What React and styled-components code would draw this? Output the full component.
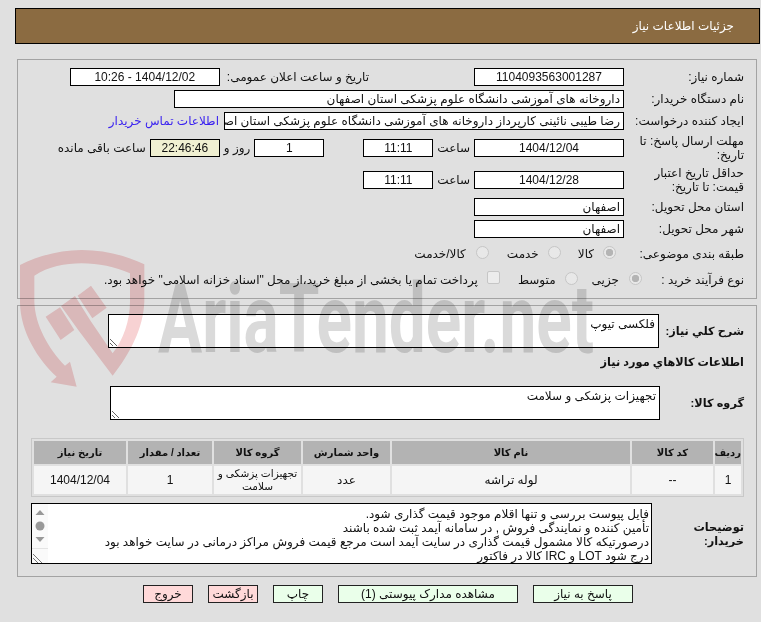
import React from "react";
import styled, { createGlobalStyle } from "styled-components";

const Global = createGlobalStyle`
  html, body { margin: 0; padding: 0; background: #e0e0e0; }
  body { font-family: "Liberation Sans", "DejaVu Sans", sans-serif; font-size: 12px; color: #111; direction: rtl; }
  * { box-sizing: border-box; }
`;

const Page = styled.div`
  position: relative;
  width: 761px;
  height: 622px;
  overflow: hidden;
  padding-top: 8px;
`;
const Header = styled.div`
  width: 745px;
  height: 36px;
  margin-right: 1px;
  background: #8b6b41;
  border: 1px solid #000;
  color: #fff;
  padding: 0 25px 0 0;
  display: flex;
  align-items: center;
  font-size: 12px;
`;
const Panel = styled.section`
  width: 740px;
  margin-right: 4px;
  margin-top: ${p => p.$top}px;
  height: ${p => p.$h}px;
  border: 1px solid #a3a3a3;
  padding: ${p => p.$pad}px 12px 0 0;
`;
const Row = styled.div`
  display: flex;
  align-items: center;
  height: ${p => p.$h || 18}px;
  margin-bottom: ${p => p.$mb ?? 4}px;
`;
const Label = styled.div`
  width: ${p => p.$w || 120}px;
  flex: none;
  line-height: 14px;
  font-weight: ${p => (p.$bold ? 700 : 400)};
  font-size: ${p => (p.$bold ? "11.3px" : "12px")};
`;
const Text = styled.span`
  flex: none;
  margin-right: ${p => p.$mr || 0}px;
  white-space: nowrap;
`;
const Field = styled.div`
  flex: none;
  width: ${p => p.$w}px;
  height: 18px;
  margin-right: ${p => p.$mr || 0}px;
  background: ${p => p.$bg || "#fff"};
  border: 1px solid #000;
  line-height: 16px;
  padding: 0 3px;
  text-align: ${p => (p.$center ? "center" : "right")};
  white-space: nowrap;
  overflow: hidden;
`;
const ContactLink = styled.a`
  flex: none;
  margin-right: 5px;
  color: #3a22f0;
  white-space: nowrap;
`;
const Radio = styled.input.attrs({ type: "radio", disabled: true })`
  appearance: none;
  flex: none;
  width: 13px;
  height: 13px;
  margin: -3px ${p => p.$mr || 0}px 0 0;
  border-radius: 50%;
  border: 1px solid #c6c6c6;
  background: #e8e8e8;
  &:checked {
    background: radial-gradient(circle, #b4b4b4 0 3.4px, #e8e8e8 4px);
  }
`;
const Check = styled.input.attrs({ type: "checkbox", disabled: true })`
  appearance: none;
  flex: none;
  width: 13px;
  height: 13px;
  margin: -5px ${p => p.$mr || 0}px 0 0;
  border: 1px solid #c6c6c6;
  border-radius: 2px;
  background: #ececec;
`;
const Area = styled.textarea`
  flex: none;
  width: ${p => p.$w}px;
  height: 34px;
  margin-right: ${p => p.$mr || 0}px;
  border: 1px solid #000;
  border-radius: 0;
  background: #fff;
  padding: 2px 3px;
  font: inherit;
  color: inherit;
  resize: both;
  outline: none;
  overflow: hidden;
`;
const SubTitle = styled.div`
  font-weight: 700;
  font-size: 11.3px;
  height: 14px;
  line-height: 14px;
  margin-bottom: 17px;
`;
const Table = styled.table`
  width: 713px;
  margin-top: 18px;
  border: 1px solid #c8c8c8;
  border-spacing: 2px;
  border-collapse: separate;
  table-layout: fixed;
  height: 59px;
`;
const Th = styled.th`
  width: ${p => p.$w}px;
  height: 23px;
  padding: 0;
  background: #b3b3b3;
  font-weight: 700;
  font-size: 10px;
  text-align: center;
  white-space: nowrap;
`;
const Td = styled.td`
  height: 28px;
  padding: 0;
  background: #f5f5f5;
  text-align: center;
  line-height: 13px;
  white-space: nowrap;
  font-size: ${p => p.$size || 12}px;
`;
const NotesRow = styled.div`
  display: flex;
  align-items: center;
  margin-top: 6px;
`;
const Notes = styled.div`
  display: flex;
  width: 621px;
  height: 61px;
  border: 1px solid #000;
  background: #fff;
`;
const NotesText = styled.div`
  flex: 1;
  padding: 3px 2px 0 0;
  line-height: 14px;
  white-space: nowrap;
`;
const ScrollTrack = styled.div`
  flex: none;
  width: 16px;
  background: #fafafa;
  display: flex;
  flex-direction: column;
  align-items: center;
  direction: ltr;
`;
const Grip = styled.div`
  margin-top: auto;
  width: 100%;
  height: 15px;
  border-top: 1px solid #e4e4e4;
  display: flex;
`;
const Buttons = styled.div`
  display: flex;
  gap: 15px;
  margin-top: 8px;
  padding-right: 128px;
`;
const Btn = styled.button`
  width: ${p => p.$w}px;
  height: 18px;
  padding: 0;
  border: 1px solid #222;
  background: ${p => (p.$red ? "#ffd9d9" : "#eaffea")};
  color: #111;
  font: inherit;
`;
const Watermark = styled.svg`
  position: absolute;
  inset: 0;
  pointer-events: none;
  mix-blend-mode: multiply;
`;

const Mark = () => (
  <Watermark width="761" height="622" viewBox="0 0 761 622" direction="ltr">
    <g transform="translate(15 245) scale(0.3333)" fill="#f7d2d3">
      <path d="M15 60 C75 30 140 15 200 15 C265 15 330 30 388 58 L388 170 C385 250 345 325 293 392 L192 258 L138 183 L180 153 L227 228 L293 325 C325 285 345 225 345 170 L345 85 C300 65 250 55 200 55 C150 55 100 65 58 92 L58 170 C60 240 100 310 150 362 L165 350 L185 425 L107 412 L125 395 C70 345 15 260 15 170 Z" />
      <path d="M92 215 L135 187 L178 255 L137 285 Z" />
      <path d="M188 152 L228 122 L275 188 L232 220 Z" />
    </g>
    <text x="158" y="352" fontFamily="Roboto, sans-serif" fontWeight="700" fontSize="96" fill="#dadada" textLength="436" lengthAdjust="spacingAndGlyphs">AriaTender.net</text>
  </Watermark>
);

const ScrollIcons = () => (
  <svg width="14" height="36" viewBox="0 0 14 36" style={{ marginTop: 5 }}>
    <path d="M2.5 6 L7 1 L11.5 6 Z" fill="#999" />
    <circle cx="7" cy="17" r="4.5" fill="#999" />
    <path d="M2.5 28 L11.5 28 L7 33 Z" fill="#999" />
  </svg>
);

const GripIcon = () => (
  <svg width="12" height="12" viewBox="0 0 12 12" style={{ marginTop: 3 }}>
    <path d="M1 2 L10 11 M1 6 L6 11" stroke="#777" strokeWidth="1" />
  </svg>
);

export default function App() {
  return (
    <Page>
      <Global />
      <Header>جزئیات اطلاعات نیاز</Header>
      <Panel $top={15} $h={240} $pad={8}>
        <Row>
          <Label>شماره نیاز:</Label>
          <Field $w={150} $center>1104093563001287</Field>
          <Text $mr={105}>تاریخ و ساعت اعلان عمومی:</Text>
          <Field $w={150} $center $mr={7}>1404/12/02 - 10:26</Field>
        </Row>
        <Row>
          <Label>نام دستگاه خریدار:</Label>
          <Field $w={450}>داروخانه های آموزشی دانشگاه علوم پزشکی استان اصفهان</Field>
        </Row>
        <Row>
          <Label>ایجاد کننده درخواست:</Label>
          <Field $w={400}>رضا طیبی نائینی کارپرداز داروخانه های آموزشی دانشگاه علوم پزشکی استان اصفهان</Field>
          <ContactLink>اطلاعات تماس خریدار</ContactLink>
        </Row>
        <Row $h={28}>
          <Label>مهلت ارسال پاسخ: تا تاریخ:</Label>
          <Field $w={150} $center>1404/12/04</Field>
          <Text $mr={4}>ساعت</Text>
          <Field $w={70} $center $mr={4}>11:11</Field>
          <Field $w={70} $center $mr={39}>1</Field>
          <Text $mr={4}>روز و</Text>
          <Field $w={70} $center $mr={4} $bg="#f0f0d2">22:46:46</Field>
          <Text $mr={4}>ساعت باقی مانده</Text>
        </Row>
        <Row $h={28}>
          <Label>حداقل تاریخ اعتبار قیمت: تا تاریخ:</Label>
          <Field $w={150} $center>1404/12/28</Field>
          <Text $mr={4}>ساعت</Text>
          <Field $w={70} $center $mr={4}>11:11</Field>
        </Row>
        <Row>
          <Label>استان محل تحویل:</Label>
          <Field $w={150}>اصفهان</Field>
        </Row>
        <Row>
          <Label>شهر محل تحویل:</Label>
          <Field $w={150}>اصفهان</Field>
        </Row>
        <Row $h={24}>
          <Label>طبقه بندی موضوعی:</Label>
          <Radio checked readOnly $mr={8} />
          <Text $mr={9}>کالا</Text>
          <Radio $mr={17} />
          <Text $mr={9}>خدمت</Text>
          <Radio $mr={18} />
          <Text $mr={10}>کالا/خدمت</Text>
        </Row>
        <Row $h={20} $mb={0}>
          <Label $w={102}>نوع فرآیند خرید :</Label>
          <Radio checked readOnly $mr={0} />
          <Text $mr={10}>جزیی</Text>
          <Radio $mr={14} />
          <Text $mr={9}>متوسط</Text>
          <Check $mr={18} />
          <Text $mr={9}>پرداخت تمام یا بخشی از مبلغ خرید،از محل "اسناد خزانه اسلامی" خواهد بود.</Text>
        </Row>
      </Panel>
      <Panel $top={6} $h={272} $pad={8}>
        <Row $h={34} $mb={7}>
          <Label $w={85} $bold>شرح کلي نياز:</Label>
          <Area $w={551} readOnly defaultValue="فلکسی تیوپ" />
        </Row>
        <SubTitle>اطلاعات کالاهاي مورد نياز</SubTitle>
        <Row $h={34} $mb={0}>
          <Label $w={84} $bold>گروه کالا:</Label>
          <Area $w={550} readOnly defaultValue="تجهیزات پزشکی و سلامت" />
        </Row>
        <Table>
          <thead>
            <tr>
              <Th $w={26}>ردیف</Th>
              <Th $w={81}>کد کالا</Th>
              <Th $w={238}>نام کالا</Th>
              <Th $w={87}>واحد شمارش</Th>
              <Th $w={87}>گروه کالا</Th>
              <Th $w={84}>تعداد / مقدار</Th>
              <Th $w={92}>تاریخ نیاز</Th>
            </tr>
          </thead>
          <tbody>
            <tr>
              <Td>1</Td>
              <Td>--</Td>
              <Td>لوله تراشه</Td>
              <Td>عدد</Td>
              <Td $size={10.5}>تجهیزات پزشکی و<br />سلامت</Td>
              <Td>1</Td>
              <Td>1404/12/04</Td>
            </tr>
          </tbody>
        </Table>
        <NotesRow>
          <Label $w={92} $bold>توضیحات خریدار:</Label>
          <Notes>
            <NotesText>
              فایل پیوست بررسی و تنها اقلام موجود قیمت گذاری شود.<br />
              تأمین کننده و نمایندگی فروش , در سامانه آیمد ثبت شده باشند<br />
              درصورتیکه کالا مشمول قیمت گذاری در سایت آیمد است مرجع قیمت فروش مراکز درمانی در سایت خواهد بود<br />
              درج شود LOT و IRC کالا در فاکتور
            </NotesText>
            <ScrollTrack>
              <ScrollIcons />
              <Grip><GripIcon /></Grip>
            </ScrollTrack>
          </Notes>
        </NotesRow>
      </Panel>
      <Buttons>
        <Btn $w={100}>پاسخ به نیاز</Btn>
        <Btn $w={180}>مشاهده مدارک پیوستی (1)</Btn>
        <Btn $w={50}>چاپ</Btn>
        <Btn $w={50} $red>بازگشت</Btn>
        <Btn $w={50} $red>خروج</Btn>
      </Buttons>
      <Mark />
    </Page>
  );
}
